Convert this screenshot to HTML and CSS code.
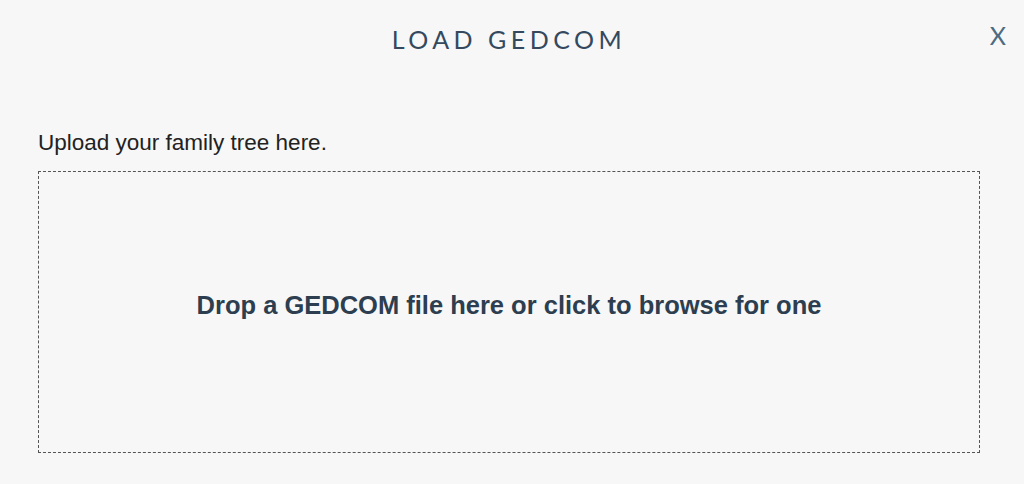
FILE: index.html
```html
<!DOCTYPE html>
<html>
<head>
<meta charset="utf-8">
<link rel="stylesheet" href="styles.css">
</head>
<body>
<div class="modal">
  <header class="modal-header">
    <h1 class="modal-title">LOAD GEDCOM</h1>
    <button class="close-btn">X</button>
  </header>
  <div class="modal-body">
    <p class="intro">Upload your family tree here.</p>
    <div class="dropzone">
      <span class="dropzone-text">Drop a GEDCOM file here or click to browse for one</span>
    </div>
  </div>
</div>
</body>
</html>
```
FILE: styles.css
```css
html, body {
  margin: 0;
  padding: 0;
  background: #f7f7f7;
}
.modal {
  width: 1024px;
  height: 484px;
  box-sizing: border-box;
  position: relative;
  font-family: "Liberation Sans", Arial, sans-serif;
}
.modal-header {
  display: flex;
  justify-content: center;
  padding-top: 25px;
  padding-right: 6px;
}
.modal-title {
  margin: 0;
  font-family: "Lato", "Noto Sans", sans-serif;
  font-weight: 400;
  font-size: 25px;
  line-height: 28px;
  letter-spacing: 4.5px;
  color: #34495e;
}
.close-btn {
  position: absolute;
  top: 21px;
  right: 18px;
  background: none;
  border: 0;
  padding: 0;
  font-family: "Lato", "Noto Sans", sans-serif;
  font-size: 25px;
  line-height: 28px;
  color: #4c6b82;
  cursor: pointer;
}
.modal-body {
  padding: 0 44px 0 38px;
}
.intro {
  margin: 77px 0 0 0;
  font-size: 22.5px;
  line-height: 26px;
  color: #222;
}
.dropzone {
  margin-top: 15px;
  height: 282px;
  box-sizing: border-box;
  border: 1px dashed #555;
  display: flex;
  align-items: center;
  justify-content: center;
}
.dropzone-text {
  font-weight: 700;
  font-size: 25.5px;
  color: #2c3e50;
  margin-bottom: 13px;
}
```
